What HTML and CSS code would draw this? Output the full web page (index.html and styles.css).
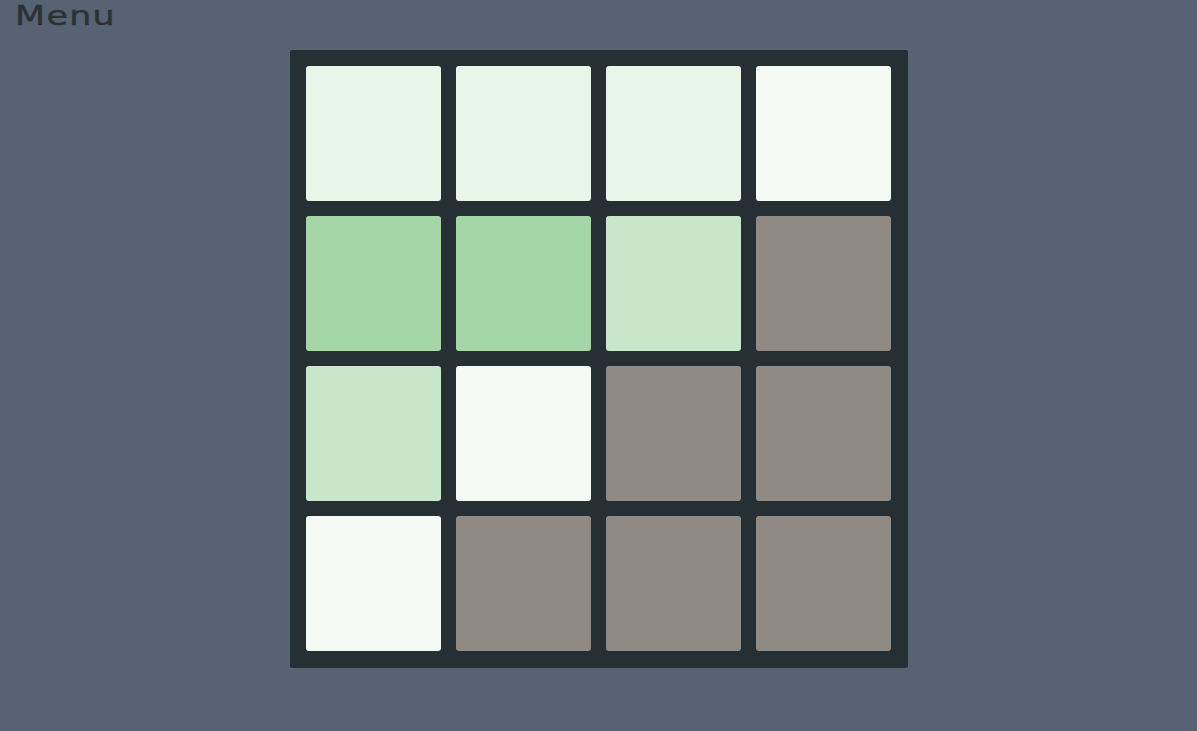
FILE: index.html
```html
<!DOCTYPE html>
<html lang="en">
  <head>
    <meta charset="UTF-8" />
    <meta name="viewport" content="width=device-width, initial-scale=1.0" />
    <title>Menu</title>
    <link rel="stylesheet" href="styles.css">
  </head>
  <body>
    <div class="top-bar">
      <span class="menu-link">Menu</span>
    </div>
    <div class="board">
      <div class="tile light"></div>
      <div class="tile light"></div>
      <div class="tile light"></div>
      <div class="tile pale"></div>

      <div class="tile green"></div>
      <div class="tile green"></div>
      <div class="tile mint"></div>
      <div class="tile stone"></div>

      <div class="tile mint"></div>
      <div class="tile pale"></div>
      <div class="tile stone"></div>
      <div class="tile stone"></div>

      <div class="tile pale"></div>
      <div class="tile stone"></div>
      <div class="tile stone"></div>
      <div class="tile stone"></div>
    </div>
  </body>
</html>
```

FILE: styles.css
```css
body {
  margin: 0;
  background-color: #556372;
  font-family: "DejaVu Sans", sans-serif;
  height: 731px;
  overflow: hidden;
}
.top-bar {
  height: 50px;
  padding-left: 15px;
}
.menu-link {
  display: inline-block;
  color: #2e3134;
  font-size: 26px;
  line-height: 32px;
  letter-spacing: 1px;
  -webkit-text-stroke: 0.4px #2e3134;
  transform: scaleX(1.34);
  transform-origin: left center;
  cursor: pointer;
}
.board {
  width: 618px;
  height: 618px;
  box-sizing: border-box;
  margin: 0 auto;
  padding: 16px 17px 17px 16px;
  background-color: #263034;
  border-radius: 2px;
  display: grid;
  grid-template-columns: repeat(4, 135px);
  grid-template-rows: repeat(4, 135px);
  gap: 15px;
}
.tile {
  border-radius: 3px;
}
.light {
  background-color: #e8f5e9;
}
.pale {
  background-color: #f4fbf5;
}
.green {
  background-color: #a5d6a7;
}
.mint {
  background-color: #c8e6c9;
}
.stone {
  background-color: #8f8b84;
}
```
